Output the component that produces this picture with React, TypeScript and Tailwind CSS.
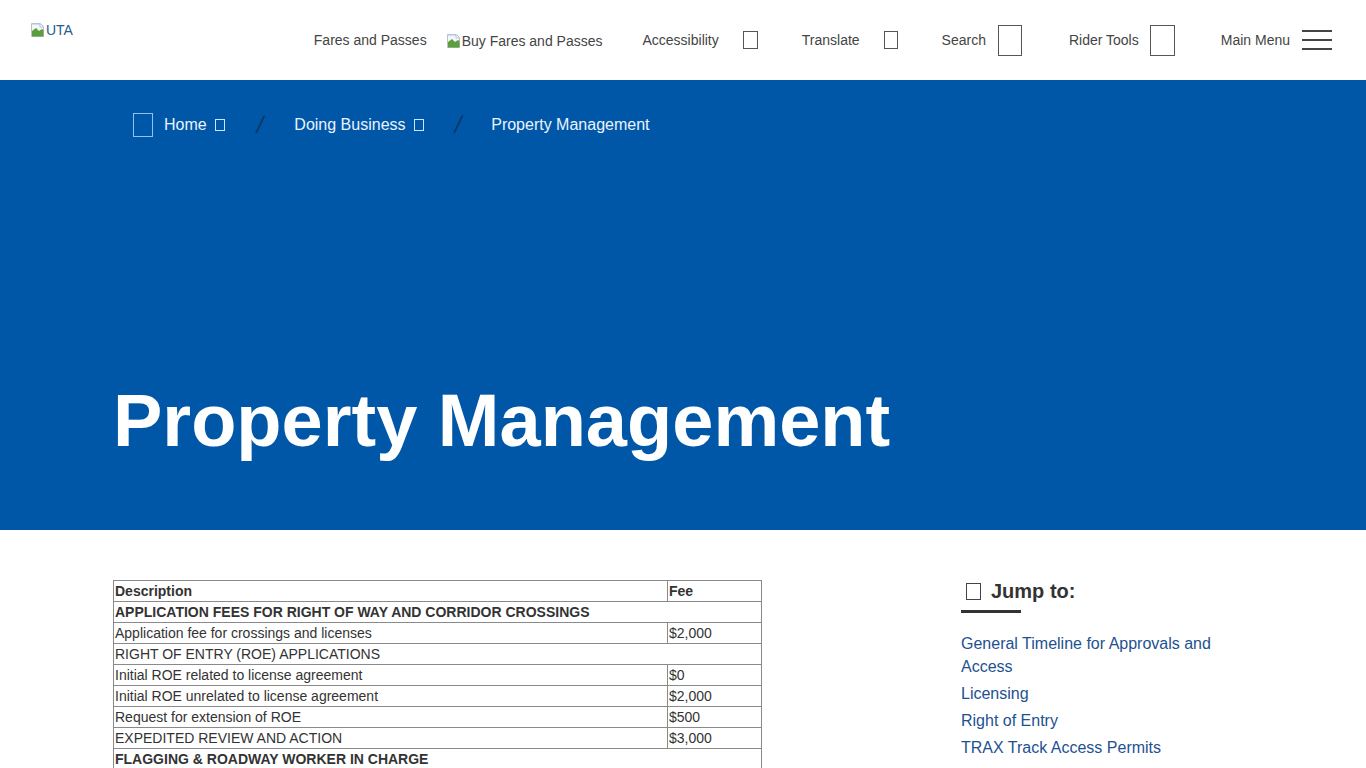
import React from "react";

// Placeholder drawn by the browser for a missing image
function BrokenImage() {
  return (
    <svg width="16" height="16" viewBox="0 0 16 16" className="inline-block shrink-0">
      <path d="M1.5 1.5h9l3 3v10h-12z" fill="#f4f6f8" stroke="#b9c2cc" />
      <path d="M2 9l4-3 3 3 3-2 1.5 1v6.5H2z" fill="#5a9e3e" />
      <path d="M2 2h8v3h3" fill="none" stroke="#a9c7e8" />
    </svg>
  );
}

// Icon-font glyph that did not load
function Missing({ className }: { className: string }) {
  return <span className={`inline-block shrink-0 border ${className}`} />;
}

const rows: Array<{ desc: string; fee?: string; bold?: boolean; span?: boolean }> = [
  { desc: "APPLICATION FEES FOR RIGHT OF WAY AND CORRIDOR CROSSINGS", bold: true, span: true },
  { desc: "Application fee for crossings and licenses", fee: "$2,000" },
  { desc: "RIGHT OF ENTRY (ROE) APPLICATIONS", span: true },
  { desc: "Initial ROE related to license agreement", fee: "$0" },
  { desc: "Initial ROE unrelated to license agreement", fee: "$2,000" },
  { desc: "Request for extension of ROE", fee: "$500" },
  { desc: "EXPEDITED REVIEW AND ACTION", fee: "$3,000" },
  { desc: "FLAGGING & ROADWAY WORKER IN CHARGE", bold: true, span: true },
];

const jumpLinks = [
  "General Timeline for Approvals and Access",
  "Licensing",
  "Right of Entry",
  "TRAX Track Access Permits",
];

export default function App() {
  return (
    <div className="min-h-screen bg-white font-['Liberation_Sans',Arial,sans-serif] text-[#333]">
      {/* Header */}
      <header className="flex h-[80px] items-start justify-between pl-[30px] pr-[34px]">
        <a className="mt-[22px] flex items-center text-[14px] leading-[16px] text-[#2b5a8c]">
          <BrokenImage />
          <span>UTA</span>
        </a>
        <nav className="flex h-full items-center text-[14px] text-[#444]">
          <a>Fares and Passes</a>
          <a className="ml-[19px] mt-[2px] flex items-center">
            <BrokenImage />
            <span>Buy Fares and Passes</span>
          </a>
          <a className="ml-[40px] flex items-center">
            Accessibility
            <Missing className="ml-[24px] h-[18px] w-[15px] border-[#555]" />
          </a>
          <a className="ml-[44px] flex items-center">
            Translate
            <Missing className="ml-[24px] h-[18px] w-[14px] border-[#555]" />
          </a>
          <a className="ml-[44px] flex items-center">
            Search
            <Missing className="ml-[12px] h-[31px] w-[24px] border-[#555]" />
          </a>
          <a className="ml-[47px] flex items-center">
            Rider Tools
            <Missing className="ml-[11px] h-[31px] w-[25px] border-[#555]" />
          </a>
          <a className="ml-[46px] flex items-center">
            Main Menu
            <span className="ml-[12px] flex w-[30px] flex-col gap-[7px]">
              <span className="h-[2px] bg-[#444]" />
              <span className="h-[2px] bg-[#444]" />
              <span className="h-[2px] bg-[#444]" />
            </span>
          </a>
        </nav>
      </header>

      {/* Hero */}
      <section className="bg-[#0057a7]">
        <div className="mx-auto flex h-[450px] w-[1140px] flex-col">
          <ol className="flex items-center pl-5 pt-[33px] text-[16px] leading-[24px] text-[#eaf3ff]">
            <li className="flex items-center">
              <Missing className="h-[24px] w-[20px] border-[#8fc3f5]" />
              <span className="ml-[11px]">Home</span>
              <Missing className="ml-[8px] h-[12px] w-[10px] border-[#cfe3fa]" />
            </li>
            <li className="ml-[32px] -skew-x-12 text-[24px] text-[#0c3766]">/</li>
            <li className="ml-[31px] flex items-center">
              <span>Doing Business</span>
              <Missing className="ml-[8px] h-[12px] w-[10px] border-[#cfe3fa]" />
            </li>
            <li className="ml-[31px] -skew-x-12 text-[24px] text-[#0c3766]">/</li>
            <li className="ml-[30px]">Property Management</li>
          </ol>
          <h1 className="mt-auto pb-[72px] text-[74px] font-bold leading-none text-white">
            Property Management
          </h1>
        </div>
      </section>

      {/* Content */}
      <main className="mx-auto flex w-[1140px] justify-between pt-[50px]">
        <table className="w-[649px] self-start border-collapse text-[14px] leading-[20px]">
          <tbody>
            <tr className="font-bold">
              <td className="h-[21px] border border-[#8a8a8a] pl-px">Description</td>
              <td className="w-[94px] border border-[#8a8a8a] pl-px">Fee</td>
            </tr>
            {rows.map((r) =>
              r.span ? (
                <tr key={r.desc} className={r.bold ? "font-bold" : ""}>
                  <td colSpan={2} className="h-[21px] border border-[#8a8a8a] pl-px">
                    {r.desc}
                  </td>
                </tr>
              ) : (
                <tr key={r.desc}>
                  <td className="h-[21px] border border-[#8a8a8a] pl-px">{r.desc}</td>
                  <td className="border border-[#8a8a8a] pl-px">{r.fee}</td>
                </tr>
              )
            )}
          </tbody>
        </table>

        <aside className="w-[292px]">
          <h2 className="flex items-center text-[20px] font-bold leading-[22px] text-[#333]">
            <Missing className="ml-[5px] h-[17px] w-[15px] border-[#444]" />
            <span className="ml-[10px]">Jump to:</span>
          </h2>
          <div className="mt-[8px] h-[3px] w-[60px] bg-[#333]" />
          <ul className="mt-[19px] flex flex-col gap-[4px] text-[16px] leading-[23px] text-[#1d5190]">
            {jumpLinks.map((l) => (
              <li key={l}>
                <a>{l}</a>
              </li>
            ))}
          </ul>
        </aside>
      </main>
    </div>
  );
}
